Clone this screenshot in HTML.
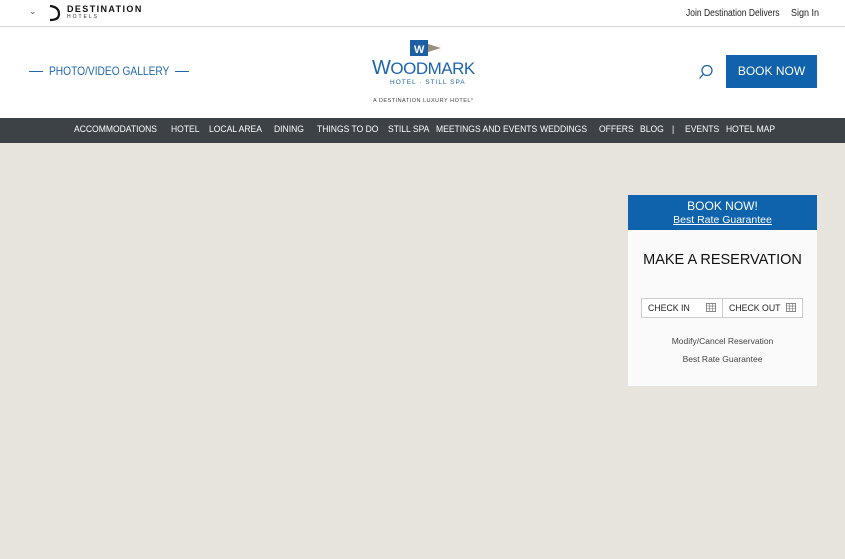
<!DOCTYPE html>
<html><head><style>
*{margin:0;padding:0;box-sizing:border-box}
body{width:845px;height:559px;overflow:hidden;background:#e7e4de;font-family:"Liberation Sans",sans-serif;position:relative}
.top{position:absolute;left:0;top:0;width:845px;height:27px;background:#fff;border-bottom:1px solid #d6d6d6}
.hdr{position:absolute;left:0;top:27px;width:845px;height:91px;background:#fff}
.nav{position:absolute;left:0;top:118px;width:845px;height:25px;background:#3d4247;color:#fff;font-size:9.5px}
.nav span{position:absolute;top:6px;transform:scaleX(.9);transform-origin:left}
.a{position:absolute;white-space:nowrap}
</style></head><body>
<div class="top">
 <div class="a" style="left:29px;top:6px;font-size:9px;color:#555">&#8964;</div>
 <svg class="a" style="left:47px;top:4px" width="16" height="18"><path d="M3 2 Q12 3 12 10 Q12 16 3 16" fill="none" stroke="#111" stroke-width="2.2"/></svg>
 <div class="a" style="left:67px;top:4px;font-size:9px;font-weight:bold;letter-spacing:1.4px;color:#111">DESTINATION</div>
 <div class="a" style="left:67px;top:14px;font-size:5px;letter-spacing:2px;color:#333">HOTELS</div>
 <div class="a" style="left:686px;top:8px;font-size:10px;color:#222;transform:scaleX(.85);transform-origin:left">Join Destination Delivers</div>
 <div class="a" style="left:791px;top:8px;font-size:10px;color:#222;transform:scaleX(.9);transform-origin:left">Sign In</div>
</div>
<div class="hdr">
 <div class="a" style="left:29px;top:44px;width:14px;height:1px;background:#1f68b0"></div>
 <div class="a" style="left:49px;top:37px;font-size:12px;color:#1f68b0;transform:scaleX(.85);transform-origin:left">PHOTO/VIDEO GALLERY</div>
 <div class="a" style="left:175px;top:44px;width:14px;height:1px;background:#1f68b0"></div>
 <svg class="a" style="left:410px;top:12px" width="32" height="18"><rect x="0" y="1" width="18" height="16" fill="#1d5fa3"/><path d="M18 5 L31 9 L18 13Z" fill="#9b8f7a"/><text x="4" y="14" font-size="11" font-weight="bold" fill="#fff" font-family="Liberation Sans">W</text></svg>
 <div class="a" style="left:372px;top:30px;font-size:20px;color:#1d66ad;letter-spacing:-.5px">W<span style="font-size:17px">OODMARK</span></div>
 <div class="a" style="left:390px;top:52px;font-size:6.5px;color:#1d66ad;letter-spacing:1px">HOTEL · STILL SPA</div>
 <div class="a" style="left:373px;top:71px;font-size:5.5px;color:#444;letter-spacing:.5px">A DESTINATION LUXURY HOTEL°</div>
 <svg class="a" style="left:698px;top:37px" width="16" height="16"><circle cx="9" cy="6.5" r="5" fill="none" stroke="#1d66ad" stroke-width="1.3"/><path d="M5.5 10 L1.5 14.5" stroke="#1d66ad" stroke-width="1.3"/></svg>
 <div class="a" style="left:726px;top:28px;width:91px;height:33px;background:#1162ac;color:#fff;font-size:12px;text-align:center;line-height:33px">BOOK NOW</div>
</div>
<div class="nav">
 <span style="left:74px">ACCOMMODATIONS</span><span style="left:171px">HOTEL</span><span style="left:209px">LOCAL AREA</span><span style="left:274px">DINING</span><span style="left:317px">THINGS TO DO</span><span style="left:388px">STILL SPA</span><span style="left:436px">MEETINGS AND EVENTS</span><span style="left:540px">WEDDINGS</span><span style="left:599px">OFFERS</span><span style="left:640px">BLOG</span><span style="left:672px">|</span><span style="left:685px">EVENTS</span><span style="left:726px">HOTEL MAP</span>
</div>
<div class="a" style="left:628px;top:195px;width:189px;height:191px;background:#fafafa">
 <div style="height:35px;background:#0f63ad;color:#fff;text-align:center;font-size:12px;padding-top:5px;line-height:13px">BOOK NOW!<br><span style="font-size:10.5px;text-decoration:underline">Best Rate Guarantee</span></div>
 <div class="a" style="left:0;width:189px;top:57px;text-align:center;font-size:14.5px;color:#111">MAKE A RESERVATION</div>
 <div class="a" style="left:13px;top:103px;width:162px;height:20px;border:1px solid #ccc;background:#fff"></div>
 <div class="a" style="left:94px;top:103px;width:1px;height:20px;background:#ccc"></div>
 <div class="a" style="left:20px;top:108px;font-size:9.5px;color:#222;transform:scaleX(.92);transform-origin:left">CHECK IN</div>
 <div class="a" style="left:101px;top:108px;font-size:9.5px;color:#222;transform:scaleX(.92);transform-origin:left">CHECK OUT</div>
 <svg class="a" style="left:78px;top:108px" width="10" height="9"><rect x=".5" y=".5" width="9" height="8" fill="none" stroke="#888"/><path d="M.5 3H9.5M.5 5.8H9.5M3.5 .5V8.5M6.5 .5V8.5" stroke="#888" stroke-width=".7"/></svg>
 <svg class="a" style="left:158px;top:108px" width="10" height="9"><rect x=".5" y=".5" width="9" height="8" fill="none" stroke="#888"/><path d="M.5 3H9.5M.5 5.8H9.5M3.5 .5V8.5M6.5 .5V8.5" stroke="#888" stroke-width=".7"/></svg>
 <div class="a" style="left:0;width:189px;top:141px;text-align:center;font-size:8.5px;color:#444">Modify/Cancel Reservation</div>
 <div class="a" style="left:0;width:189px;top:159px;text-align:center;font-size:8.5px;color:#444">Best Rate Guarantee</div>
</div>
</body></html>
